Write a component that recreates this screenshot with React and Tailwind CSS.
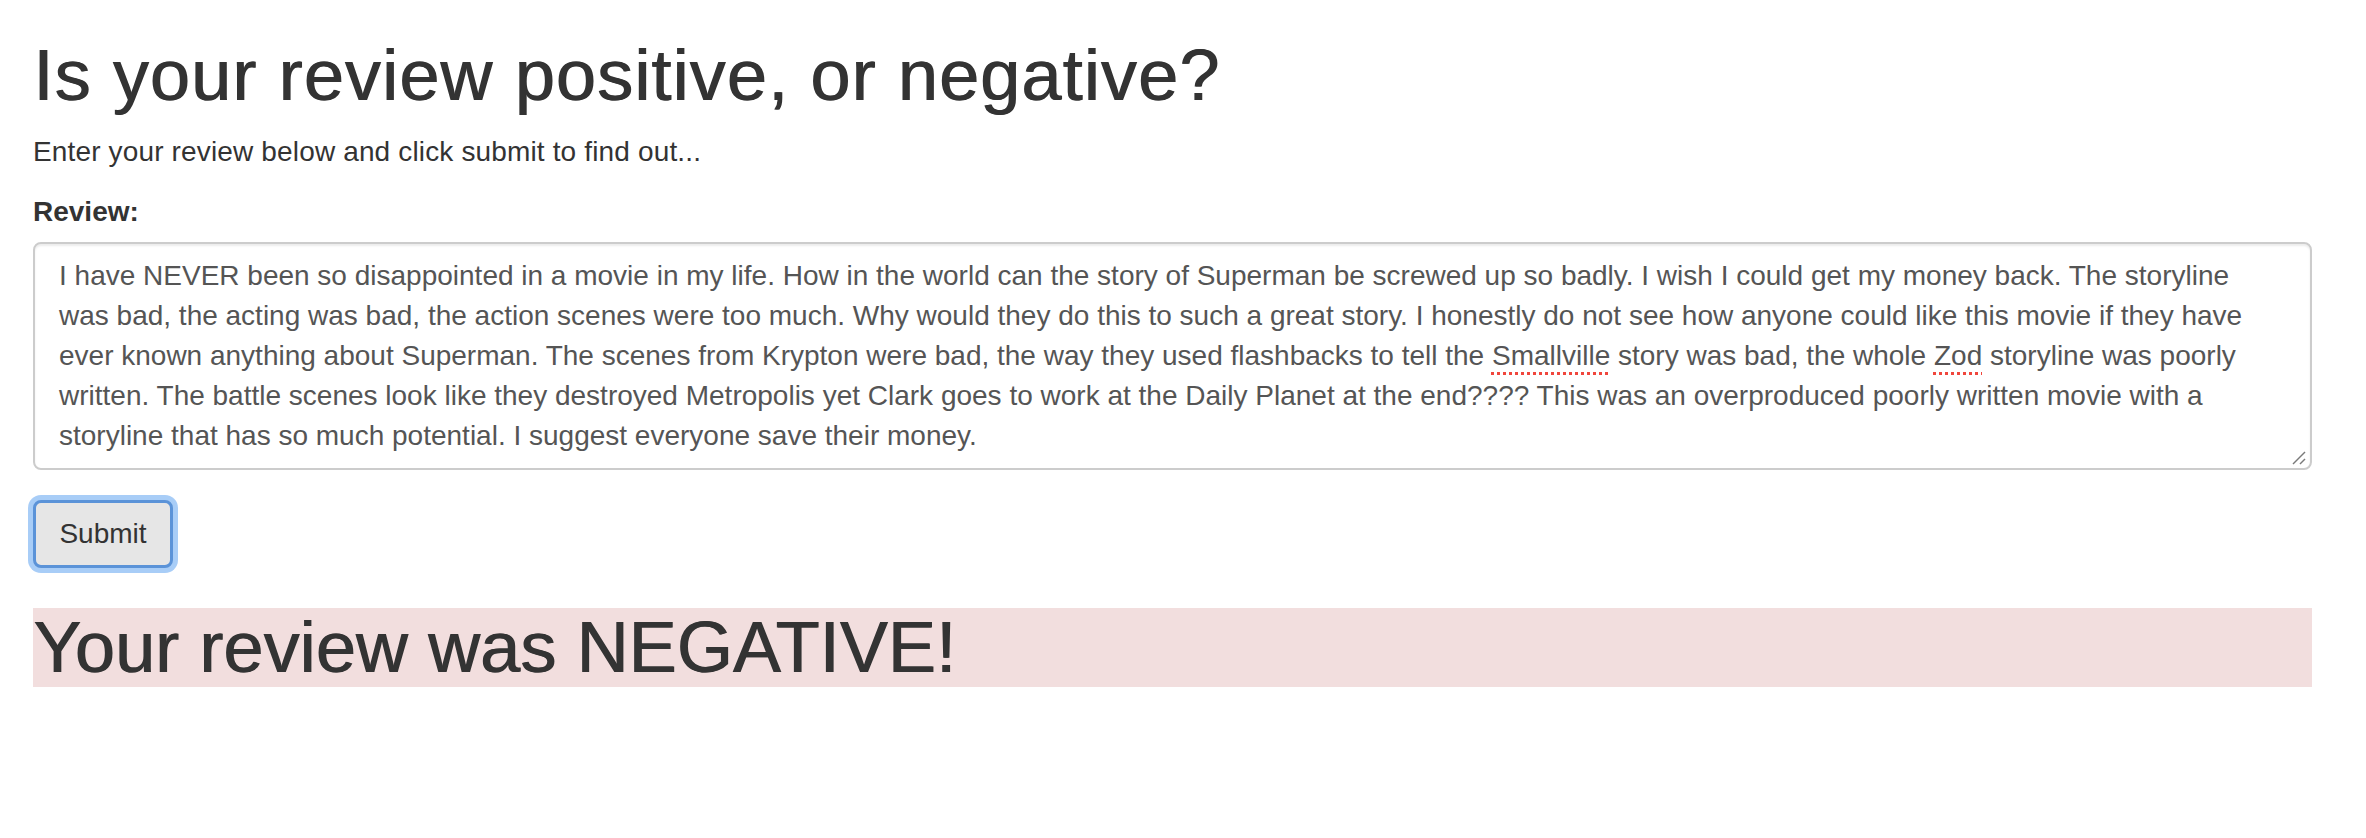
import React from "react";

const lines = [
  ["I have NEVER been so disappointed in a movie in my life. How in the world can the story of Superman be screwed up so badly. I wish I could get my money back. The storyline"],
  ["was bad, the acting was bad, the action scenes were too much. Why would they do this to such a great story. I honestly do not see how anyone could like this movie if they have"],
  [
    "ever known anything about Superman. The scenes from Krypton were bad, the way they used flashbacks to tell the ",
    { typo: "Smallville" },
    " story was bad, the whole ",
    { typo: "Zod" },
    " storyline was poorly",
  ],
  ["written. The battle scenes look like they destroyed Metropolis yet Clark goes to work at the Daily Planet at the end???? This was an overproduced poorly written movie with a"],
  ["storyline that has so much potential. I suggest everyone save their money."],
];

const ReviewBox = () => (
  <div
    role="textbox"
    className="relative h-[228px] w-full overflow-hidden rounded-[8px] border-2 border-[#cccccc] bg-white px-[24px] py-[12px] text-[28px] leading-[40px] text-[#555555] shadow-[inset_0_2px_2px_rgba(0,0,0,0.075)]"
  >
    {lines.map((parts, i) => (
      <div key={i} className="whitespace-nowrap">
        {parts.map((p, j) =>
          typeof p === "string" ? (
            <span key={j}>{p}</span>
          ) : (
            <span
              key={j}
              className="underline decoration-dotted decoration-[#f0463c] decoration-[3px] underline-offset-[7px]"
            >
              {p.typo}
            </span>
          )
        )}
      </div>
    ))}
    <svg className="absolute bottom-[3px] right-[3px]" width="16" height="16" viewBox="0 0 16 16">
      <line x1="2" y1="15" x2="14" y2="3" stroke="#7a7a7a" strokeWidth="1.5" />
      <line x1="9" y1="15" x2="14" y2="10" stroke="#7a7a7a" strokeWidth="1.5" />
    </svg>
  </div>
);

export default function App() {
  return (
    <div className="min-h-[838px] bg-white pl-[33px] pr-[54px] font-['Liberation_Sans',Arial,sans-serif] text-[#333333]">
      <h1 className="pt-[36px] text-[72px] font-normal leading-[79px] tracking-[1.15px]">
        <span className="inline-block drop-shadow-[1.3px_0_0_#333333]">Is your review positive, or negative?</span>
      </h1>
      <p className="mt-[17px] text-[28px] leading-[40px] tracking-[0.15px]">
        Enter your review below and click submit to find out...
      </p>
      <div className="mt-[20px] text-[28px] font-bold leading-[40px]">Review:</div>
      <div className="mt-[10px]">
        <ReviewBox />
      </div>
      <div className="mt-[30px]">
        <button
          type="button"
          className="h-[68px] w-[140px] rounded-[8px] border-[3px] border-[#5b93d8] bg-[#e6e6e6] text-[28px] leading-[40px] text-[#333333] shadow-[0_0_0_5px_#a8cdf7]"
        >
          Submit
        </button>
      </div>
      <h1 className="mt-[40px] bg-[#f2dede] text-[72px] font-normal leading-[79px] tracking-[0.1px]">
        <span className="inline-block drop-shadow-[1.3px_0_0_#333333]">Your review was NEGATIVE!</span>
      </h1>
    </div>
  );
}
